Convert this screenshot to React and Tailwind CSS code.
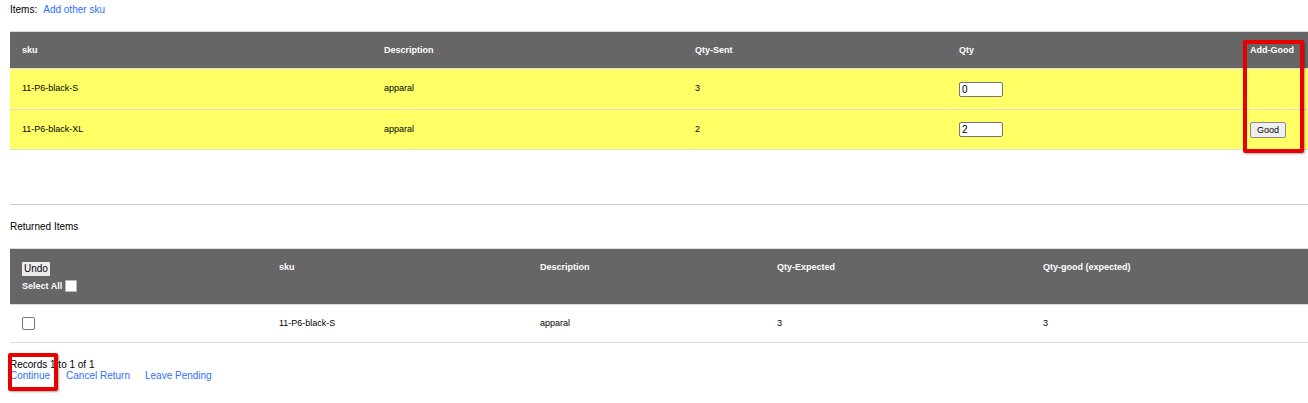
import React from "react";

function Link({ children, className = "" }) {
  return (
    <a href="#" className={"text-[#2d6ff7] no-underline " + className}>
      {children}
    </a>
  );
}

export default function App() {
  const cols1 = "grid grid-cols-[362px_311px_264px_291px_1fr]";
  const cols2 = "grid grid-cols-[257px_261px_237px_266px_1fr]";
  return (
    <div className="font-['Liberation_Sans',Arial,sans-serif] text-[10px] text-black bg-white pl-[10px] min-h-[403px]">
      <div className="h-[18px] leading-[20px] flex">
        <span>Items:</span>
        <Link className="ml-[6px]">Add other sku</Link>
      </div>

      <div className="relative mt-[13px] border-t border-[#dcdcdc] text-[9px]">
        <div className={cols1 + " h-[36px] bg-[#666666] items-center text-white font-bold pt-[2px]"}>
          <div className="pl-[12px]">sku</div>
          <div className="pl-[12px]">Description</div>
          <div className="pl-[12px]">Qty-Sent</div>
          <div className="pl-[12px]">Qty</div>
          <div className="pl-[12px]">Add-Good</div>
        </div>
        <div className={cols1 + " h-[41px] border-t border-[#dcdcdc] bg-[#ffff66] items-center"}>
          <div className="pl-[12px]">11-P6-black-S</div>
          <div className="pl-[12px]">apparal</div>
          <div className="pl-[12px]">3</div>
          <div className="pl-[12px]">
            <input
              defaultValue="0"
              className="w-[44px] h-[15px] border border-[#767676] rounded-[2px] bg-white px-[2px] text-[10px] leading-[13px] block"
            />
          </div>
          <div className="pl-[12px]"></div>
        </div>
        <div className={cols1 + " h-[41px] border-t border-b border-[#dcdcdc] bg-[#ffff66] items-center"}>
          <div className="pl-[12px]">11-P6-black-XL</div>
          <div className="pl-[12px]">apparal</div>
          <div className="pl-[12px]">2</div>
          <div className="pl-[12px]">
            <input
              defaultValue="2"
              className="w-[44px] h-[15px] border border-[#767676] rounded-[2px] bg-white px-[2px] text-[10px] leading-[13px] block"
            />
          </div>
          <div className="pl-[12px]">
            <button className="w-[36px] h-[16px] border border-[#8a8a8a] rounded-[2px] bg-[#efefef] text-[9px] leading-[14px] text-black block">
              Good
            </button>
          </div>
        </div>
        <div className="absolute left-[1233px] top-[8px] w-[61px] h-[113px] border-[4px] border-[#e60000] rounded-[2px] shadow-[1px_1px_2px_rgba(0,0,0,0.35)]"></div>
      </div>

      <div className="mt-[54px] border-t border-[#cccccc]"></div>

      <div className="mt-[13px] h-[18px] leading-[18px]">Returned Items</div>

      <div className="mt-[12px] border-t border-[#dcdcdc] text-[9px]">
        <div className={cols2 + " h-[55px] bg-[#666666] items-start pt-[13px] text-white font-bold"}>
          <div className="pl-[12px]">
            <button className="h-[14px] px-[2px] bg-[#ececec] rounded-[1px] text-black font-normal text-[10px] leading-[14px] block">
              Undo
            </button>
            <div className="flex items-end mt-[4px] h-[12px]">
              <span className="leading-[11px]">Select All</span>
              <span className="ml-[3px] w-[12px] h-[12px] bg-white border border-[#bbbbbb] rounded-[1px] inline-block"></span>
            </div>
          </div>
          <div className="pl-[12px] leading-[11px]">sku</div>
          <div className="pl-[12px] leading-[11px]">Description</div>
          <div className="pl-[12px] leading-[11px]">Qty-Expected</div>
          <div className="pl-[12px] leading-[11px]">Qty-good (expected)</div>
        </div>
        <div className={cols2 + " h-[39px] border-t border-b border-[#dcdcdc] bg-white items-center"}>
          <div className="pl-[12px]">
            <span className="block w-[13px] h-[13px] border border-[#767676] rounded-[2px] bg-white"></span>
          </div>
          <div className="pl-[12px]">11-P6-black-S</div>
          <div className="pl-[12px]">apparal</div>
          <div className="pl-[12px]">3</div>
          <div className="pl-[12px]">3</div>
        </div>
      </div>

      <div className="relative mt-[16px] leading-[11px]">
        <div>Records 1 to 1 of 1</div>
        <div className="flex">
          <Link>Continue</Link>
          <Link className="ml-[16px]">Cancel Return</Link>
          <Link className="ml-[15px]">Leave Pending</Link>
        </div>
        <div className="absolute left-[-2px] top-[-6px] w-[50px] h-[38px] border-[4px] border-[#e60000] rounded-[2px] shadow-[1px_1px_2px_rgba(0,0,0,0.35)]"></div>
      </div>
    </div>
  );
}
